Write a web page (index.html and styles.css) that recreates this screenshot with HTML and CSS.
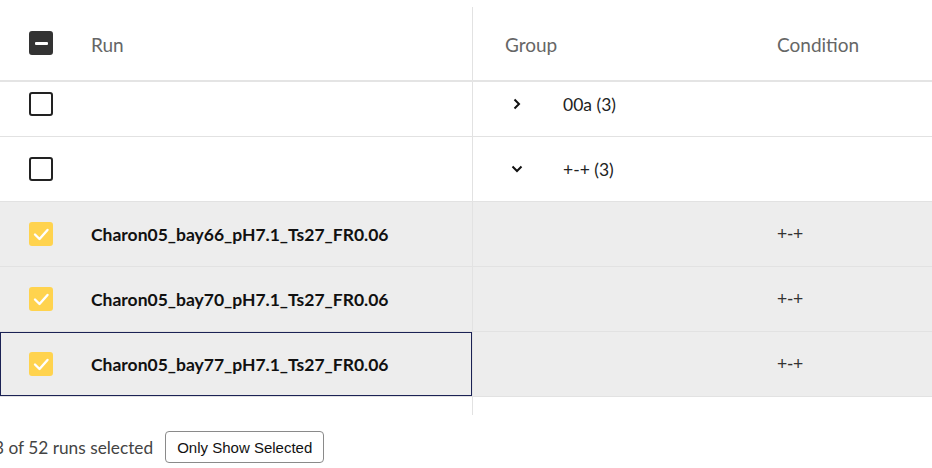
FILE: index.html
```html
<!DOCTYPE html>
<html>
<head>
<meta charset="utf-8">
<link rel="stylesheet" href="styles.css">
</head>
<body>
<div class="table">
  <div class="row head">
    <div class="cell run">
      <span class="cb cb-ind"><span class="bar"></span></span>
      <span class="htext">Run</span>
    </div>
    <div class="cell group"><span class="htext">Group</span></div>
    <div class="cell cond"><span class="htext">Condition</span></div>
  </div>

  <div class="row first">
    <div class="cell run"><span class="cb"></span></div>
    <div class="cell group">
      <svg class="chev" viewBox="0 0 12 12"><path d="M3.5 1.5 L8 6 L3.5 10.5"/></svg>
      <span class="gtext">00a (3)</span>
    </div>
    <div class="cell cond"></div>
  </div>

  <div class="row">
    <div class="cell run"><span class="cb"></span></div>
    <div class="cell group">
      <svg class="chev" viewBox="0 0 12 12"><path d="M1.5 3.5 L6 8 L10.5 3.5"/></svg>
      <span class="gtext">+-+ (3)</span>
    </div>
    <div class="cell cond"></div>
  </div>

  <div class="row sel">
    <div class="cell run">
      <span class="cb cb-on"><svg viewBox="0 0 24 24"><path d="M6 12.5 L10.5 17 L18.5 8"/></svg></span>
      <span class="name">Charon05_bay66_pH7.1_Ts27_FR0.06</span>
    </div>
    <div class="cell group"></div>
    <div class="cell cond"><span class="ctext">+-+</span></div>
  </div>

  <div class="row sel">
    <div class="cell run">
      <span class="cb cb-on"><svg viewBox="0 0 24 24"><path d="M6 12.5 L10.5 17 L18.5 8"/></svg></span>
      <span class="name">Charon05_bay70_pH7.1_Ts27_FR0.06</span>
    </div>
    <div class="cell group"></div>
    <div class="cell cond"><span class="ctext">+-+</span></div>
  </div>

  <div class="row sel">
    <div class="cell run focus">
      <span class="cb cb-on"><svg viewBox="0 0 24 24"><path d="M6 12.5 L10.5 17 L18.5 8"/></svg></span>
      <span class="name">Charon05_bay77_pH7.1_Ts27_FR0.06</span>
    </div>
    <div class="cell group"></div>
    <div class="cell cond"><span class="ctext">+-+</span></div>
  </div>

  <div class="row tail">
    <div class="cell run"></div>
  </div>
</div>

<div class="footer">
  <span class="count">3 of 52 runs selected</span>
  <button class="btn">Only Show Selected</button>
</div>
</body>
</html>
```

FILE: styles.css
```css
html, body {
  margin: 0;
  padding: 0;
  background: #ffffff;
  font-family: Lato, "Open Sans", sans-serif;
  overflow: hidden;
}

.table {
  width: 932px;
}

.row {
  display: grid;
  grid-template-columns: 473px 271px 1fr;
  height: 65px;
  box-sizing: border-box;
  border-bottom: 1px solid #e2e2e2;
}

.row.head {
  height: 82px;
  align-items: end;
  border-bottom: 2px solid #e4e4e4;
}

.row.first {
  height: 55px;
}

.row.first .cell {
  padding-bottom: 10px;
}

.row.sel {
  background: #ededed;
}

.row.tail {
  height: 18px;
  border-bottom: none;
}

.cell {
  display: flex;
  align-items: center;
  box-sizing: border-box;
}

.cell.run {
  padding-left: 29px;
  gap: 38px;
  border-right: 1px solid #e2e2e2;
}

.head .cell {
  height: 73px;
  padding-top: 2px;
}

.cell.run.focus {
  box-shadow: inset 0 0 0 1px #1b2255;
}

.cell.group {
  padding-left: 38px;
  gap: 40px;
}

.head .cell.group {
  padding-left: 32px;
}

.cell.cond {
  padding-left: 33px;
}

.htext {
  font-size: 19px;
  color: #666666;
}

.head .cell.run .cb {
  margin-top: -3px;
}

.cb {
  width: 24px;
  height: 24px;
  box-sizing: border-box;
  border: 2.5px solid #222222;
  border-radius: 3px;
  display: flex;
  align-items: center;
  justify-content: center;
  flex: none;
}

.cb-ind {
  background: #333333;
  border-color: #333333;
}

.cb-ind .bar {
  width: 13px;
  height: 3px;
  border-radius: 1px;
  background: #ffffff;
}

.cb-on {
  background: #ffd34e;
  border-color: #ffd34e;
}

.cb-on svg {
  width: 24px;
  height: 24px;
  flex: none;
}

.cb-on path {
  fill: none;
  stroke: #ffffff;
  stroke-width: 2.4;
  stroke-linecap: round;
  stroke-linejoin: round;
}

.chev {
  width: 12px;
  height: 12px;
  flex: none;
}

.chev path {
  fill: none;
  stroke: #111111;
  stroke-width: 2;
}

.gtext {
  font-size: 17.5px;
  color: #222222;
}

.name {
  font-size: 17.5px;
  font-weight: 700;
  color: #111111;
}

.ctext {
  font-family: "Liberation Sans", Arial, sans-serif;
  font-size: 17.5px;
  color: #333333;
}

.footer {
  display: flex;
  align-items: center;
  gap: 12px;
  margin-top: 16px;
}

.count {
  margin-left: -6px;
  font-size: 17.3px;
  color: #444444;
}

.btn {
  height: 32px;
  padding: 0 11px;
  background: #ffffff;
  border: 1px solid #8a8a8a;
  border-radius: 4px;
  font-family: "Liberation Sans", Arial, sans-serif;
  font-size: 15px;
  color: #111111;
}
```
